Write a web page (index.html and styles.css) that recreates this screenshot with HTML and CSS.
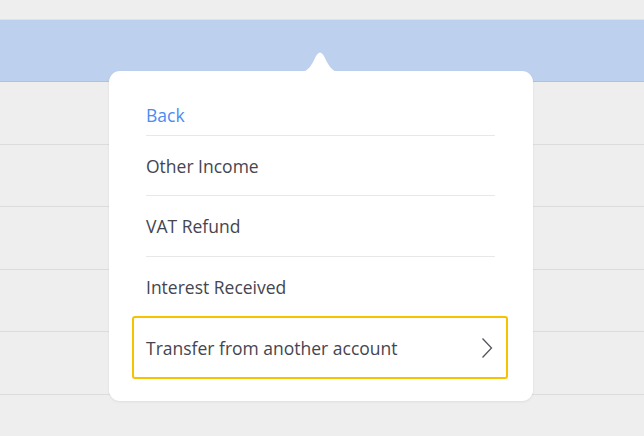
FILE: index.html
```html
<!DOCTYPE html>
<html lang="en">
<head>
    <meta charset="UTF-8">
    <meta name="viewport" content="width=device-width, initial-scale=1.0">
    <title>Category</title>
    <link rel="stylesheet" href="styles.css">
</head>
<body>
    <div class="page">
        <div class="top-gap"></div>
        <div class="row row-selected"></div>
        <div class="row"></div>
        <div class="row"></div>
        <div class="row"></div>
        <div class="row"></div>
        <div class="row"></div>

        <div class="popover">
            <svg class="popover-arrow" width="40" height="22" viewBox="0 0 40 22">
                <path d="M0 22 C9 22 12 14 16 6 Q20 -1 24 6 C28 14 31 22 40 22 Z" fill="#fff"/>
            </svg>
            <ul class="menu">
                <li class="menu-item menu-back">Back</li>
                <li class="menu-item">Other Income</li>
                <li class="menu-item menu-tall">VAT Refund</li>
                <li class="menu-item menu-last">Interest Received</li>
                <li class="menu-item menu-active">
                    <span>Transfer from another account</span>
                    <svg class="chevron" width="12" height="22" viewBox="0 0 12 22">
                        <path d="M1.5 1.5 L10.5 11 L1.5 20.5" fill="none" stroke="#55555e" stroke-width="1.3"/>
                    </svg>
                </li>
            </ul>
        </div>
    </div>
</body>
</html>
```

FILE: styles.css
```css
body {
    margin: 0;
    padding: 0;
    background-color: #eeeeee;
    font-family: "Open Sans", "Liberation Sans", sans-serif;
}
.page {
    position: relative;
    width: 644px;
    height: 436px;
    overflow: hidden;
}
.top-gap {
    height: 19px;
    border-bottom: 1px solid #dde3ec;
}
.row {
    height: 61.5px;
    border-bottom: 1px solid #dcdcdc;
}
.row-selected {
    height: 61px;
    background-color: #bdd0ee;
    border-bottom: 1px solid #a8c2ee;
}
.popover {
    position: absolute;
    left: 109px;
    top: 71px;
    width: 424px;
    height: 330px;
    box-sizing: border-box;
    padding: 24px 38px 0 37px;
    background-color: #fff;
    border-radius: 11px;
    box-shadow: 0 1px 3px rgba(0, 0, 0, 0.07);
}
.popover-arrow {
    position: absolute;
    left: 191px;
    top: -21px;
}
.menu {
    list-style: none;
    margin: 0;
    padding: 0;
}
.menu-item {
    display: flex;
    align-items: center;
    height: 59px;
    font-size: 17.5px;
    color: #45454f;
    border-bottom: 1px solid #e8e8e8;
}
.menu-back {
    height: 40px;
    color: #4b8cf3;
}
.menu-tall {
    height: 60px;
}
.menu-last {
    border-bottom: none;
}
.menu-active {
    height: 59px;
    margin: 0 -13px 0 -14px;
    padding: 0 13px 0 12px;
    justify-content: space-between;
    border: 2px solid #f7c200;
    border-radius: 3px;
}
.chevron {
    display: block;
}
```
